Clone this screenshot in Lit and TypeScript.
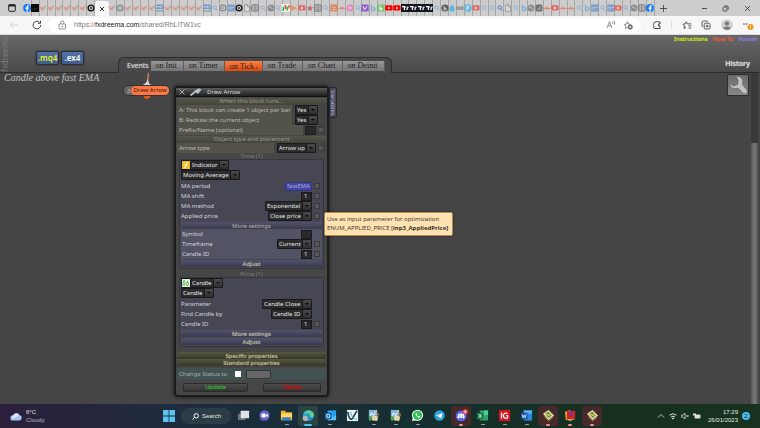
import { LitElement, html, css, svg, nothing } from "lit";
import { customElement, property } from "lit/decorators.js";

/* ---------- favicons of the tab strip (8x8 view box) ---------- */
const lens = (c: string) => svg`<circle cx="3.6" cy="3.4" r="1.7" fill="none" stroke=${c} stroke-width=".8"/><path d="M4.8 4.8 6.4 6.6" stroke=${c} stroke-width=".9"/>`;
const tube = (c: string) => svg`<rect x=".2" y="1.2" width="7.4" height="5.4" rx="1.4" fill=${c}/><path d="M3.1 2.7v2.6L5.3 4z" fill="#fff"/>`;
const knot = (bg: string, fg: string) => svg`<circle cx="4" cy="4" r="3.6" fill=${bg}/><circle cx="4" cy="4" r="1.5" fill="none" stroke=${fg} stroke-width="1.1"/>`;
const tile = (bg: string, t: unknown) => svg`<rect x=".3" y=".4" width="7.4" height="7.2" rx=".6" fill=${bg}/>${t}`;

const FAV: Record<string, unknown> = {
  f: svg`<circle cx="4" cy="4" r="3.9" fill="#1877f2"/><path d="M4.7 7.8V4.8h1l.2-1.2H4.7v-.7c0-.4.2-.6.7-.6h.5v-1c-1.500-.3-2.400.2-2.400 1.500v.8h-1v1.200h1v3z" fill="#fff"/>`,
  k: svg`<rect y="0" width="8" height="8" fill="#0b0b0b"/><path d="M1.500 5.500 6 4.300" stroke="#3a3a3a"/>`,
  x: svg`<path d="M.5 2.400l1.800 2.200L5 6" stroke="#e39a94" stroke-width="1.300" fill="none"/><path d="M2.400 5.800 7 1.800" stroke="#cf9a94" stroke-width="1.300"/><path d="M3.800 5.600 7 3.400" stroke="#a9c3ae" stroke-width=".9"/><circle cx="3" cy="4.900" r="1.300" fill="#dc948c"/>`,
  o: knot("#1d1d1d", "#ddd"),
  q: knot("#8d8d8d", "#d6d6d6"),
  m: tile("#6c93cc", svg`<path d="M1 3.800V2l1 1 1-1v1.800M4 2h1.200v1.800H4zM6 2h1" stroke="#dfe9f5" stroke-width=".6" fill="none"/><rect x="1" y="5" width="6" height="1.400" fill="#e7d78e"/>`),
  s: lens("#7fa9d8"),
  S: lens("#2f6fc0"),
  b: tile("#7f9cc9", svg`<path d="M1 3.400h6M1 5h4" stroke="#b9cae4" stroke-width=".8"/>`),
  d: svg`<path d="M1.600.8h3l2 2v4.600h-5z" fill="#dcdcdc" stroke="#777" stroke-width=".6"/><path d="M4.500.8v2.100h2.100" fill="none" stroke="#777" stroke-width=".6"/>`,
  g: svg`<rect x=".6" y=".8" width="6.800" height="6.400" rx="1.500" fill="none" stroke="#777" stroke-width="1"/><path d="M.6 3h6.800M.6 5.200h6.800M4 .8v6.400" stroke="#777" stroke-width=".7"/>`,
  r: svg`<circle cx="4" cy="4" r="3.500" fill="#8b8f92"/><path d="M2 2.600l2 .8 1.800 2" stroke="#ccc" stroke-width="1" fill="none"/>`,
  R: svg`<rect x=".6" y=".6" width="6.800" height="6.800" rx="1.500" fill="#6b7276"/><path d="M2 6 6 2M4 5h2" stroke="#c3c8cb" stroke-width=".8"/>`,
  c: svg`<rect width="8" height="8" fill="#eee"/><path d="M1.300 3v4" stroke="#2b9b3a" stroke-width="1.300"/><path d="M3.300 1v4" stroke="#d23a33" stroke-width="1.300"/><path d="M5.200 2.500v4" stroke="#2b9b3a" stroke-width="1.300"/><path d="M7 1v3.500" stroke="#d23a33" stroke-width="1.200"/>`,
  p: svg`<path d="M.6 1v6.200L7.800 4.200z" fill="#de9a68"/>`,
  y: tube("#e0706c"),
  Y: tube("#f00"),
  a: svg`<path d="M4 .6l1 2.300 2.500.2-1.900 1.700.6 2.500L4 6 1.800 7.300l.6-2.500L.5 3.100 3 2.900z" fill="#cc7474"/><circle cx="3" cy="4.400" r="1" fill="#6d84b4"/>`,
  e: tile("#dc8a62", svg`<path d="M2.200 2.600 4 4.200l1.800-1.600M2.500 5.600h3" stroke="#f3e1d6" stroke-width=".7" fill="none"/>`),
  h: svg`<path d="M.4 4.500h1.800l.8-1.200 1 2 1-1.600.8.800h1.800" stroke="#dd8873" stroke-width="1.100" fill="none"/>`,
  i: svg`<circle cx="4" cy="4" r="3.500" fill="#e083b4"/><path d="M4 1.200v5.600M1.500 2.700l5 2.600M6.500 2.700l-5 2.600" stroke="#f5d3e5" stroke-width=".6"/>`,
  u: tile("#8e62c9", svg`<path d="M2 2.300 3.600 5.600 6 2.300" stroke="#eee" stroke-width="1" fill="none"/>`),
  B: svg`<path d="M2.500.8v5l1.400.9 2.100-1.200V4.100L3.700 3.300" stroke="#74ace4" stroke-width="1.200" fill="none"/>`,
  n: tile("#7cc576", svg`<path d="M3 1.800v4M3 4.200h1.800v1.600H3" stroke="#fff" stroke-width=".9" fill="none"/>`),
  t: svg`<rect width="8" height="8" fill="#131722"/><path d="M1 2.600h2.400V6M5.600 6 7.200 2.600" stroke="#fff" stroke-width="1.200" fill="none"/><circle cx="4.800" cy="3" r=".7" fill="#fff"/>`,
  w: svg`<circle cx="4" cy="4" r="3.600" fill="#5b5b5b"/><path d="M3.200 2v4M3.200 4.100h1.700V6H3.200" stroke="#ddd" stroke-width=".9" fill="none"/>`,
  l: svg`<path d="M4 .5C5.500 2.300 6.700 3.500 6.700 5a2.700 2.700 0 0 1-5.400 0C1.300 3.500 2.500 2.300 4 .5z" fill="#5fb9de"/>`,
  j: svg`<path d="M.5 2.500c1.500-.6 2.500-.4 3.500.4 1-.8 2-1 3.500-.4v3.300H.5z" fill="#8b8b8b"/><path d="M1.500 4h5" stroke="#ccc" stroke-width=".6"/>`,
  z: svg`<circle cx="4" cy="4" r="3.700" fill="#5fb7de"/><path d="M3 6V2.200h2.500M3 4h2" stroke="#e9f5fb" stroke-width=".9" fill="none"/>`,
};
const fav = (k: string) => html`<svg class="fav" viewBox="0 0 8 8" aria-hidden="true">${FAV[k]}</svg>`;

/* ---------- shared form pieces ---------- */
const formStyles = css`
  * { box-sizing: border-box; }
  select, input, button { font: inherit; color: inherit; margin: 0; border: 0; padding: 0; border-radius: 0; outline: 0; background: none; }
  select { appearance: none; }
`;

@customElement("fx-select")
class FxSelect extends LitElement {
  @property() value = "";
  @property() label = "";
  static styles = [formStyles, css`
    :host { display: inline-grid; height: 10px; border: 1px solid #19191b; border-radius: 1px; background: #2c2c2f; color: #e6e6e6; }
    select { grid-area: 1 / 1; height: 8px; line-height: 8px; padding: 0 10px 0 1px; }
    .arrow { grid-area: 1 / 1; justify-self: end; width: 9px; height: 8px; border-left: 1px solid #19191b; background: linear-gradient(#4a4a4c, #2f2f31); pointer-events: none; display: grid; place-items: center; }
    .arrow::after { content: ""; border: 2px solid transparent; border-top-color: #0c0c0c; border-bottom: 0; }
  `];
  render() {
    return html`<select aria-label=${this.label}><option>${this.value}</option></select><span class="arrow"></span>`;
  }
}

type Row = { label: string; kind: "select" | "input" | "param"; value: string; tick?: boolean };

@customElement("fx-rows")
class FxRows extends LitElement {
  @property({ attribute: false }) rows: Row[] = [];
  static styles = [formStyles, css`
    :host { display: block; }
    .row { display: flex; align-items: center; height: 10px; gap: 2px; }
    .name { flex: 1; white-space: nowrap; }
    .text { width: 11px; height: 9px; background: #29292b; border: 1px solid #19191b; padding: 0 2px; color: #e6e6e6; }
    .param { width: 27px; background: #4343a2; color: #a9a9dc; border-color: #36367c; padding: 0 1px; text-align: right; }
    .tick { appearance: none; width: 6px; height: 6px; background: #565656; border: 1px solid #39393b; }
    .gap { width: 6px; }
  `];
  render() {
    return this.rows.map((r, i) => html`<div class="row">
      <label class="name" for="c${i}">${r.label}</label>
      ${r.kind === "select"
        ? html`<fx-select id="c${i}" .value=${r.value} .label=${r.label}></fx-select>`
        : html`<input id="c${i}" class="text ${r.kind}" .value=${r.value}>`}
      ${r.tick ? html`<input class="tick" type="checkbox" aria-label="Use as input parameter">` : html`<span class="gap"></span>`}
    </div>`);
  }
}

const TIME_ROWS: Row[] = [
  { label: "MA period", kind: "param", value: "fastEMA", tick: true },
  { label: "MA shift", kind: "input", value: "1", tick: true },
  { label: "MA method", kind: "select", value: "Exponential", tick: true },
  { label: "Applied price", kind: "select", value: "Close price", tick: true },
];
const MORE_ROWS: Row[] = [
  { label: "Symbol", kind: "input", value: "" },
  { label: "Timeframe", kind: "select", value: "Current", tick: true },
  { label: "Candle ID", kind: "input", value: "1", tick: true },
];
const PRICE_ROWS: Row[] = [
  { label: "Parameter", kind: "select", value: "Candle Close" },
  { label: "Find Candle by", kind: "select", value: "Candle ID" },
  { label: "Candle ID", kind: "input", value: "1", tick: true },
];

/* ---------- block editor window ---------- */
@customElement("fx-block")
class FxBlock extends LitElement {
  static styles = [formStyles, css`
    :host { display: flex; align-items: flex-start; width: 163px; color: #bababa; }
    .win { width: 155px; border: 2px solid #1c1c1c; border-radius: 4px; background: #464646; box-shadow: 0 0 4px #161616; padding-bottom: 3px; }
    .title { display: flex; align-items: center; height: 9px; padding-left: 3px; gap: 5px; background: linear-gradient(#5a5a5a, #1f1f1f); border-bottom: 1px solid #111; color: #ddd; }
    .title svg { height: 8px; }
    .title .x { width: 6px; }
    .title .pen { width: 12px; }
    .title b { font-weight: 400; }
    .side { writing-mode: vertical-rl; width: 8px; height: 31px; line-height: 7px; margin-top: 1px; padding-top: 2px; background: #47475c; border: 1px solid #26262e; color: #bcbcd0; border-radius: 0 2px 2px 0; }
    .sec { margin: 1px 1px 0; background: #444; }
    .olive { height: 7px; line-height: 7px; text-align: center; background: linear-gradient(#55564a, #43443a); color: #98988a; overflow: hidden; }
    .r { display: flex; align-items: stretch; height: 10px; }
    .r label { flex: 1; background: #53534a; padding-left: 2px; line-height: 10px; white-space: nowrap; }
    .ctl { display: flex; align-items: center; justify-content: flex-end; gap: 2px; padding: 0 2px; }
    .wide { width: 34px; padding-right: 8px; }
    .arrowtype { width: 52px; }
    .text { width: 11px; height: 9px; background: #29292b; border: 1px solid #1f1f1f; }
    .tick { appearance: none; flex: none; width: 6px; height: 6px; background: #565656; border: 1px solid #3a3a3a; }
    .cap { height: 6px; line-height: 6px; text-align: center; color: #7e7e7e; }
    .box { margin: 0 3px; border: 1px solid #363640; border-radius: 1px; background: #474754; color: #d2d2d8; padding: 0 1px 1px; }
    .pick { display: flex; height: 10px; color: #ddd; }
    .pick svg { width: 9px; height: 10px; background: #19191b; }
    .box fx-rows { padding: 0 2px 0 0; }
    .main { margin-top: 1px; }
    .bar { display: block; width: 100%; height: 7px; line-height: 6px; text-align: center; background: linear-gradient(#52526e, #3a3a4c); color: #b6b69e; border-radius: 1px; overflow: hidden; }
    .bold { text-shadow: 0 0 1px currentColor; }
    .more { background: #535366; margin: 1px 0; }
    .more fx-rows { padding-left: 1px; }
    .two { display: grid; gap: 1px; margin-top: 1px; }
    .price { margin-top: 2px; }
    .props { display: block; width: calc(100% - 2px); height: 7px; line-height: 6px; margin: 0 1px; background: linear-gradient(#56573f, #35362a); color: #b9b98c; overflow: hidden; }
    .first { margin-top: 5px; }
    .status { display: flex; align-items: center; height: 12px; margin: 2px 1px 0; padding-left: 2px; background: #425252; color: #a4b0b0; }
    .status .chk { appearance: none; width: 6px; height: 6px; background: #fff; margin: 0 5px 0 8px; }
    .status .field { width: 25px; height: 9px; background: #666; border: 1px solid #333; border-radius: 1px; }
    .acts { display: flex; justify-content: space-between; padding: 3px 6px 0 7px; }
    .acts button { height: 9px; line-height: 7px; border: 1px solid #2a2a2a; border-radius: 2px; background: linear-gradient(#4c4c4c, #343434); }
    .upd { width: 65px; color: #2fae2f; }
    .del { width: 58px; color: #d00d0d; }
  `];
  render() {
    return html`
    <div class="win">
      <div class="title">
        <svg class="x" viewBox="0 0 6 8" stroke="#aaa" aria-hidden="true"><path d="M.5 1.500l5 5M5.500 1.500l-5 5"/></svg>
        <svg class="pen" viewBox="0 0 12 8" aria-hidden="true"><path d="M.5 7.500 6 3.200" stroke="#c3cdd2" stroke-width="1.600"/><path d="M4 3l4 3 3.500-4.500L9 .3 4 3z" fill="#b7c0c5"/></svg>
        <b>Draw Arrow</b>
      </div>
      <section class="sec">
        <div class="olive">When this block runs...</div>
        <div class="r"><label>A: This block can create 1 object per bar</label><span class="ctl wide"><fx-select value="Yes" label="One object per bar"></fx-select></span></div>
        <div class="r"><label>B: Redraw the current object</label><span class="ctl wide"><fx-select value="Yes" label="Redraw the current object"></fx-select></span></div>
        <div class="r"><label for="pfx">Prefix/Name (optional)</label><span class="ctl"><input id="pfx" class="text"><input type="checkbox" class="tick" aria-label="Use as input parameter"></span></div>
      </section>
      <section class="sec">
        <div class="olive">Object type and placement</div>
        <div class="r"><label>Arrow type</label><span class="ctl arrowtype"><fx-select value="Arrow up" label="Arrow type"></fx-select><input type="checkbox" class="tick" aria-label="Use as input parameter"></span></div>
      </section>
      <div class="cap">Time (1)</div>
      <section class="box">
        <div class="pick"><svg viewBox="0 0 9 10" aria-hidden="true"><rect x="1" y="1" width="8" height="8" fill="#f3c02c"/><path d="M3 8c2 0 1.500-5.500 4-5.500M3.500 5h3" stroke="#fff" fill="none"/></svg><fx-select value="Indicator" label="Source"></fx-select></div>
        <div class="pick"><fx-select value="Moving Average" label="Indicator"></fx-select></div>
        <fx-rows class="main" .rows=${TIME_ROWS}></fx-rows>
        <div class="more"><button class="bar">More settings</button><fx-rows .rows=${MORE_ROWS}></fx-rows></div>
        <button class="bar bold">Adjust</button>
      </section>
      <div class="cap price">Price (1)</div>
      <section class="box">
        <div class="pick"><svg viewBox="0 0 9 10" aria-hidden="true"><rect x="1" y="1" width="8" height="8" fill="#e4f3df"/><path d="M3 2v6M6.500 3v5" stroke="#4ba844"/><path d="M2.200 3.500h1.600v3H2.200zM5.600 4.500h1.800v2.500H5.600z" fill="#fff" stroke="#4ba844" stroke-width=".7"/></svg><fx-select value="Candle" label="Source"></fx-select></div>
        <div class="pick"><fx-select value="Candle" label="Candle"></fx-select></div>
        <fx-rows class="main" .rows=${PRICE_ROWS}></fx-rows>
        <div class="two"><button class="bar bold">More settings</button><button class="bar bold">Adjust</button></div>
      </section>
      <button class="props bold first">Specific properties</button>
      <button class="props bold">Standard properties</button>
      <div class="status"><label for="st">Change Status to</label><input id="st" class="chk" type="checkbox"><input class="field" aria-label="Status"></div>
      <div class="acts"><button class="upd bold">Update</button><button class="del bold">Delete</button></div>
    </div>
    <div class="side">Variables</div>`;
  }
}

/* ---------- browser frame ---------- */
@customElement("browser-bar")
class BrowserBar extends LitElement {
  static styles = [formStyles, css`
    :host { display: block; font-family: "Liberation Sans", sans-serif; font-size: 7px; color: #555; }
    .tabs { display: flex; height: 16px; background: #cdcdcd; align-items: stretch; }
    .menu { flex: none; width: 24px; display: grid; place-items: center; }
    .menu svg { width: 8px; height: 8px; }
    .group { display: flex; min-width: 0; }
    .early { flex: none; width: 71px; }
    .late { flex: 1; }
    .tab { flex: 1; min-width: 0; display: flex; align-items: center; justify-content: center; border-right: 1px solid #a6a6a6; }
    .fav { flex: none; width: 8px; height: 8px; }
    .active { flex: none; width: 14px; background: #f7f7f7; border-radius: 3px 3px 0 0; display: grid; place-items: center; margin-top: 1px; }
    .active svg { width: 6px; height: 6px; }
    .sys { flex: none; width: 105px; display: flex; justify-content: space-between; align-items: center; padding: 0 9px 0 5px; }
    .sys svg { width: 7px; height: 7px; }
    .sys .plus { margin-right: 19px; }
    .bar { display: flex; align-items: center; height: 19px; background: #f7f7f7; border-bottom: 1px solid #dcdcdc; }
    .nav { width: 49px; display: flex; gap: 13px; padding-left: 9px; }
    .nav svg, .tools svg { width: 10px; height: 10px; display: block; }
    .addr { flex: 1; height: 15px; border-radius: 8px; background: #fff; display: flex; align-items: center; padding: 0 8px; gap: 7px; }
    .addr svg { width: 10px; height: 10px; }
    .url { flex: 1; display: flex; color: #7a7a7a; white-space: pre; }
    .url b { font-weight: 400; color: #222; }
    .tools { width: 119px; display: flex; justify-content: space-between; align-items: center; padding: 0 6px 0 11px; }
    .tools .me { width: 12px; height: 12px; }
    .tools .dots { width: 12px; height: 12px; }
    .line { width: 1px; height: 8px; background: #ddd; }
  `];
  render() {
    const tabs = (s: string) => [...s].map((k) => html`<span class="tab">${fav(k)}</span>`);
    return html`
    <div class="tabs">
      <span class="menu"><svg viewBox="0 0 8 8" aria-hidden="true"><rect x=".7" y=".7" width="6.600" height="6.600" rx="1" fill="none" stroke="#222"/><path d="M.5 1.500h7" stroke="#222" stroke-width="2"/></svg></span>
      <div class="group early">${tabs("fkxxxxxxo")}</div>
      <span class="active"><svg viewBox="0 0 6 6" stroke="#333" aria-hidden="true"><path d="M1 1l4 4M5 1 1 5"/></svg></span>
      <div class="group late">${tabs("xqxxxxmxxxxxmsqbodgsrscpyagsehisuBnYYttttswljzyssSdsBrRhyhhsBbsbysrgf")}</div>
      <div class="sys">
        <svg class="plus" viewBox="0 0 7 7" stroke="#333" stroke-width=".8"><path d="M3.500 0v7M0 3.500h7"/></svg>
        <svg viewBox="0 0 7 7" stroke="#333" stroke-width=".8"><path d="M1 3.500h5"/></svg>
        <svg viewBox="0 0 7 7" stroke="#333" stroke-width=".8" fill="none"><rect x="1" y="2" width="4" height="4" rx="1"/><path d="M2.500.9h2.500a1.200 1.200 0 0 1 1.200 1.200v2.500"/></svg>
        <svg viewBox="0 0 7 7" stroke="#333" stroke-width=".8"><path d="M1 1l5 5M6 1 1 6"/></svg>
      </div>
    </div>
    <div class="bar">
      <div class="nav">
        <svg viewBox="0 0 10 10" stroke="#cfcfcf" fill="none"><path d="M9 5H1.500M4.500 2l-3 3 3 3"/></svg>
        <svg viewBox="0 0 10 10" stroke="#444" fill="none"><path d="M8.700 5A3.800 3.800 0 1 1 7.400 2.200M8.500.8v2.500H6"/></svg>
      </div>
      <div class="addr">
        <svg viewBox="0 0 10 10" stroke="#777" stroke-width=".8" fill="none"><rect x="2" y="4" width="6.500" height="5" rx=".8"/><path d="M3.600 4V2.500a1.600 1.600 0 0 1 3.200 0V4"/><circle cx="5.200" cy="6.500" r=".4" fill="#777"/></svg>
        <span class="url">https://<b>fxdreema.com</b>/shared/RhLiTW1vc</span>
        <svg viewBox="0 0 10 10" stroke="#777" stroke-width=".8" fill="none"><path d="M1 8l2.500-6.500L6 8M2 5.800h3M6.500 1.500q1.200 1 0 2.500M8 .8q1.800 1.700 0 4"/></svg>
        <svg viewBox="0 0 10 10" stroke="#666" stroke-width=".8" fill="none"><path d="M4.500 7.500 2.500 8.500l.4-2.400L1.200 4.400l2.300-.4 1-2.200 1 2.200 2.200.4"/><circle cx="7.200" cy="7" r="2.200" fill="#666"/><path d="M7.200 5.800v2.400M6 7h2.400" stroke="#fff"/></svg>
      </div>
      <div class="tools">
        <svg viewBox="0 0 10 10" stroke="#444" fill="none"><path d="M3 2h1.200a1 1 0 0 1 1.800 0h2v2a1.100 1.100 0 1 0 0 2v2.500H3C1.500 8.500 1.200 7 2 6.300 1 5.500 1.200 4.500 2 4c-.3-1 .2-2 1-2z"/></svg>
        <span class="line"></span>
        <svg viewBox="0 0 10 10" stroke="#444" stroke-width=".9" fill="none"><path d="M4 7.300 2 8.500l.5-2.600L.9 4.200l2.300-.3L4.300 1.700l1.100 2.200h3.800M6.500 5.900h2.700M6.500 8h2.700"/></svg>
        <svg viewBox="0 0 10 10" stroke="#444" stroke-width=".9" fill="none"><rect x="3.200" y="3.200" width="5.800" height="5.800" rx="1.200"/><path d="M2 7A1.500 1.500 0 0 1 1 5.500V2.500A1.500 1.500 0 0 1 2.500 1h3A1.500 1.500 0 0 1 7 2M6.100 4.600v3M4.600 6.100h3"/></svg>
        <svg class="me" viewBox="0 0 12 12"><circle cx="6" cy="6" r="5.700" fill="#cfcdca"/><circle cx="6" cy="4.500" r="2.100" fill="#777"/><path d="M2.500 9.500C2.500 6.800 9.500 6.800 9.500 9.500 8 11 4 11 2.500 9.500z" fill="#777"/></svg>
        <svg class="dots" viewBox="0 0 12 12"><circle cx="2" cy="5" r=".8" fill="#444"/><circle cx="4.500" cy="5" r=".8" fill="#444"/><circle cx="8.500" cy="8" r="3" fill="#ee9a1c"/><path d="M8.500 6.300v2M8.500 9v.8" stroke="#fff" stroke-width=".8"/></svg>
      </div>
    </div>`;
  }
}

/* ---------- taskbar ---------- */
const mt = svg`<path d="M1 5 7 1l6 6-6 5z" fill="#e6d9a0"/><path d="M3.500 5.200 7 3l3.500 3.800-3.500 3z" fill="#4f8c5a"/><path d="M4.500 5.500l3 1.500 1.500-2" stroke="#f5c93a" stroke-width="1.200" fill="none"/><path d="M2 8l5 5 5-4" stroke="#a97d35" fill="none"/>`;
const chartApp = svg`<rect x="2" y="1" width="9" height="9" fill="#7fb2dc"/><path d="M3 8l2-4 2 3 3-5" stroke="#fff" fill="none"/><path d="M6 7l6 1-1 5-6-1z" fill="#e7d9a6"/><path d="M2 7l4 2-2 4-2-1z" fill="#58a355"/><path d="M9 4l3 1v3" stroke="#e0812c" fill="none"/>`;
const APPS: { n: string; p: unknown; run?: string; hot?: string }[] = [
  { n: "Task view", p: svg`<rect x="1" y="5" width="8" height="7" fill="#6e7276"/><rect x="4" y="2" width="9" height="8" rx=".5" fill="#dfe2e4"/>` },
  { n: "Chat", p: svg`<circle cx="7" cy="7" r="5.600" fill="#6a62c6"/><path d="M2 12.500l1-3 3 2z" fill="#5a53b4"/><rect x="3.800" y="4.800" width="4.400" height="4.400" rx="1" fill="#fff"/><path d="M8.500 6.500 10.600 5v4L8.500 7.600z" fill="#fff"/>` },
  { n: "Explorer", run: "grey", p: svg`<path d="M1 2h4.500l1 1.500H13V12H1z" fill="#f0b429"/><path d="M1 5h12v4H1z" fill="#ffd766"/><path d="M2.500 9h9v3.500h-9z" fill="#2f7fd0"/>` },
  { n: "Edge", run: "blue", hot: "lit", p: svg`<circle cx="7" cy="7" r="6" fill="#1f86c9"/><path d="M1.500 5.500C3 .3 12 .2 13 6.500c.2 3-4.500 3.200-4.800 1.500C9 5 4.500 3.500 1.500 5.500z" fill="#5fd08d"/><path d="M1 7c1-3 5-3.500 6.500-1.500C5.500 6 5 9 8 11.500 5 14 1 11 1 7z" fill="#2ba6dd"/><circle cx="3.500" cy="10" r="2.800" fill="#b5b5b5"/>` },
  { n: "Outlook", run: "grey", p: svg`<rect x="4" y="1.500" width="9" height="9" fill="#2aa3e8"/><path d="M4 7l4.500 2.500L13 7v5H4z" fill="#58c3f5"/><rect x="1" y="4" width="7" height="7" rx=".6" fill="#0f64b8"/><circle cx="4.500" cy="7.500" r="1.800" fill="none" stroke="#fff"/>` },
  { n: "Charts", p: svg`<rect x="1" y="1" width="12" height="12" fill="#eef3f2"/><path d="M2 3c1 8 3 8 4 8s3-5 6-9" stroke="#1d4a5e" stroke-width="1.800" fill="none"/><path d="M5 3c1 6 3 8 7 8" stroke="#3fb1a5" fill="none"/>` },
  { n: "Terminal A", run: "grey", p: chartApp },
  { n: "Terminal B", run: "grey", p: chartApp },
  { n: "WhatsApp", run: "grey", p: svg`<circle cx="7" cy="6.800" r="6" fill="#fff"/><path d="M1 13l1.200-4 3 3z" fill="#fff"/><circle cx="7" cy="6.800" r="5" fill="#2fbf55"/><path d="M4.800 4.500c.2 2.500 2 4.400 4.600 4.800l.5-1.300-1.300-.6-.6.6C7 7.500 6.400 6.900 6 6l.6-.6L6 4z" fill="#fff"/>` },
  { n: "Telegram", p: svg`<circle cx="7" cy="7" r="5.600" fill="#2ba0dc"/><path d="M3.200 7l7-2.800-1.200 6-2.300-1.700-1.100 1V7.800l3-2.300-3.800 2.100z" fill="#fff"/>` },
  { n: "Discord", run: "red", hot: "warn", p: svg`<circle cx="6.500" cy="7.500" r="5.800" fill="#5865f2"/><path d="M3.500 5.500c2-1 4-1 6 0l1 4-1.700.8-.6-1H4.800l-.6 1L2.500 9.500z" fill="#fff"/><circle cx="5.100" cy="7.600" r=".7" fill="#5865f2"/><circle cx="7.900" cy="7.600" r=".7" fill="#5865f2"/><circle cx="11" cy="3" r="2.800" fill="#f0504e"/><circle cx="11" cy="3" r="1" fill="#fff"/>` },
  { n: "Excel", run: "grey", p: svg`<rect x="4" y="1.500" width="9" height="11" rx=".6" fill="#2fa567"/><path d="M8.500 1.500H13v5H8.500z" fill="#4fcf8b"/><rect x="1" y="4" width="7" height="7" rx=".6" fill="#12733f"/><path d="M3 5.500 6 9.500M6 5.500 3 9.500" stroke="#fff"/>` },
  { n: "IG", run: "grey", p: svg`<rect x="1" y="1" width="12" height="12" fill="#d8131b"/><path d="M3.800 3.800v6.400" stroke="#fff" stroke-width="1.400"/><path d="M10.300 5.200A2.600 2.900 0 1 0 10.500 9V7.300H8.400" stroke="#fff" stroke-width="1.200" fill="none"/>` },
  { n: "Word", run: "grey", p: svg`<rect x="4" y="1.500" width="9" height="11" rx=".6" fill="#2f86dd"/><path d="M4 1.500h9v3.500H4z" fill="#58b0f5"/><rect x="1" y="4" width="7" height="7" rx=".6" fill="#174fa5"/><path d="M2.300 5.700l1.100 3.800 1.100-3 1.100 3 1.100-3.800" stroke="#fff" stroke-width=".8" fill="none"/>` },
  { n: "MetaTrader", run: "red", hot: "warn", p: mt },
  { n: "Library", run: "red", p: svg`<path d="M1 3l6-2 1 9-6 2z" fill="#e8b02c"/><path d="M3 2h9v9H3z" fill="#c9252b"/><path d="M6 3h3v4H6z" fill="#7c2bb0"/><path d="M3 11l3 2 6-2" fill="#f1d06a"/>` },
  { n: "MetaTrader 2", run: "red", hot: "warn", p: mt },
];

@customElement("task-bar")
class TaskBar extends LitElement {
  static styles = [formStyles, css`
    :host { display: grid; grid-template-columns: 1fr auto 1fr; align-items: center; height: 24px; font: 6px/8px "Liberation Sans", sans-serif; color: #e4e6e8; background: linear-gradient(90deg, #2b1f3b 0%, #202a3e 20%, #182e3a 38%, #152f2c 60%, #17301f 80%, #17331f 100%); }
    .weather { display: flex; align-items: center; gap: 4px; padding-left: 10px; }
    .weather svg { width: 12px; height: 9px; }
    .weather span { display: block; color: #b4b6c4; }
    .mid { display: flex; align-items: center; }
    .start { width: 22px; height: 20px; display: grid; place-items: center; }
    .start svg { width: 12px; height: 12px; }
    .find { width: 50px; height: 16px; border-radius: 8px; background: #2b3c46; display: flex; align-items: center; gap: 3px; padding-left: 11px; margin: 0 2px 0 1px; }
    .find svg { width: 7px; height: 7px; }
    .apps { width: 369px; display: flex; justify-content: space-between; }
    .app { width: 20px; height: 20px; border-radius: 2px; display: grid; justify-items: center; align-content: start; padding-top: 3px; gap: 2px; }
    .app svg { width: 13px; height: 13px; }
    .lit { background: #2b4344; }
    .warn { background: #46292b; }
    .mark { width: 4px; height: 1px; background: #9aa19e; border-radius: 1px; }
    .mark.blue { width: 8px; height: 2px; background: #55c0ee; }
    .mark.red { background: #f28e8e; height: 2px; }
    .tray { justify-self: end; display: flex; align-items: center; gap: 4px; padding-right: 10px; text-align: right; }
    .tray svg { width: 8px; height: 8px; }
    .clock { margin-left: 3px; }
    .badge { width: 8px; height: 8px; border-radius: 4px; background: #4db8ea; color: #123; text-align: center; }
  `];
  render() {
    return html`
    <div class="weather">
      <svg viewBox="0 0 12 9" aria-hidden="true"><path d="M3 8.500a2.600 2.600 0 0 1 0-5.200A3.500 3.500 0 0 1 9.500 3a2.800 2.800 0 0 1 0 5.500z" fill="#a9c3f2"/><path d="M3 7a2 2 0 0 1 .5-3.500C4.500 1 8 1 9 3.500" fill="#d7e3fb"/></svg>
      <div>6°C<span>Cloudy</span></div>
    </div>
    <div class="mid">
      <button class="start" aria-label="Start"><svg viewBox="0 0 12 12" fill="#5cc3f2"><path d="M0 0h5.600v5.600H0zM6.400 0H12v5.600H6.400zM0 6.400h5.600V12H0zM6.400 6.400H12V12H6.400z"/></svg></button>
      <button class="find"><svg viewBox="0 0 7 7" fill="none" stroke="#fff"><circle cx="4.200" cy="2.800" r="2.200"/><path d="M2.600 4.500.4 6.700"/></svg>Search</button>
      <div class="apps">${APPS.map((a) => html`<button class="app ${a.hot ?? ""}" aria-label=${a.n}><svg viewBox="0 0 14 14">${a.p}</svg>${a.run ? html`<span class="mark ${a.run}"></span>` : nothing}</button>`)}</div>
    </div>
    <div class="tray">
      <svg viewBox="0 0 8 8" fill="none" stroke="#ddd" stroke-width=".8"><path d="M1 5.500 4 2.500l3 3"/></svg>
      <svg viewBox="0 0 8 8" fill="none" stroke="#ddd"><path d="M.5 3.200q3.500-3 7 0M2 5q2-1.600 4 0"/><circle cx="4" cy="6.500" r=".6" fill="#ddd"/></svg>
      <svg viewBox="0 0 8 8" fill="none" stroke="#ddd" stroke-width=".8"><path d="M.6 3v2.200h1.300L4 7V1.200L1.900 3zM5.500 3l2 2.200M7.500 3l-2 2.200"/></svg>
      <svg viewBox="0 0 8 8"><rect x="1.500" y="2.500" width="6" height="4" rx="1" fill="#ddd"/><path d="M0 1.500h3v2H0z" fill="#ddd"/></svg>
      <div class="clock">17:29<br>26/01/2023</div>
      <span class="badge">2</span>
    </div>`;
  }
}

/* ---------- whole screen ---------- */
@customElement("app-root")
class AppRoot extends LitElement {
  static styles = [formStyles, css`
    :host { display: flex; flex-direction: column; min-height: 100vh; font: 6px/8px "Noto Sans", "Open Sans", sans-serif; background: #454545; color: #c8c8c8; }
    .head { display: flex; align-items: flex-end; height: 38px; background: linear-gradient(#686868, #494949); border-bottom: 1px solid #2c2c2c; }
    .brand { writing-mode: vertical-rl; transform: rotate(180deg); width: 9px; height: 36px; font-size: 8px; line-height: 9px; color: #7c7c7c; overflow: hidden; }
    .files { display: flex; gap: 2px; margin-left: 27px; padding-bottom: 7px; }
    .files button { width: 23px; height: 14px; font-size: 8px; line-height: 10px; border: 1px solid #2a2d33; border-radius: 2px; background: linear-gradient(#5374a6, #3e5c8c); color: #fff; box-shadow: 0 0 2px #222; font-weight: 600; }
    .files .mq { color: #eef02c; }
    .events { display: flex; align-items: center; height: 16px; margin: 0 0 -1px 34px; padding: 0 6px 0 8px; border: 1px solid #2c2c2c; border-bottom: 0; border-radius: 6px 6px 0 0; background: #484848; }
    .events .cap { font-size: 7px; margin-right: 2px; color: #ccc; text-shadow: 0 0 1px #ccc; }
    .ev { height: 10px; padding: 0 6px 0 5px; font: 8px/9px "Liberation Serif", serif; color: #1c1c1c; background: linear-gradient(#979797, #757575); border-right: 1px solid #5c5c5c; white-space: nowrap; }
    .ev.on { background: linear-gradient(#fb7f46, #dc4c0c); display: flex; gap: 1px; align-items: flex-end; padding-right: 4px; }
    .ev sub { font-size: 5px; line-height: 6px; color: #7a2a08; }
    .right { flex: 1; align-self: stretch; display: flex; flex-direction: column; justify-content: space-between; align-items: flex-end; padding-bottom: 4px; }
    .links { display: flex; gap: 5px; padding-right: 3px; }
    .links a, .hist { text-decoration: none; text-shadow: 0 0 1px currentColor; }
    .ins { color: #c3f019; }
    .how { color: #f2593a; }
    .forum { color: #8585f5; }
    .hist { font-size: 7px; font-weight: 600; color: #d6d6d6; padding-right: 10px; }
    .body { flex: 1; display: flex; min-height: 331px; }
    .canvas { flex: 1; position: relative; }
    h1 { margin: 0; padding: 0 4px; font: italic 10px/10px "Liberation Serif", serif; color: #c2c2c2; }
    .node { position: absolute; left: 123px; top: 12px; height: 11px; display: flex; align-items: center; border-radius: 5px; background: #666; color: #bbb; padding-left: 3px; gap: 1px; border: 1px solid #333; }
    .node b { font-weight: 400; background: #fb7846; color: #3a1505; border-radius: 5px; padding: 0 2px; height: 9px; line-height: 9px; }
    .wire { position: absolute; left: 140px; top: 0; width: 14px; height: 27px; }
    .block { position: absolute; left: 174px; top: 13px; }
    .tip { position: absolute; left: 324px; top: 139px; padding: 2px 4px 2px 2px; font: 6px/9px "Open Sans", sans-serif; color: #33302a; background: #fee1b0; border: 1px solid #b08a50; border-radius: 2px; white-space: nowrap; box-shadow: 0 0 2px #222; }
    .wrench { width: 22px; height: 22px; margin: 1px 2px 0 0; border: 1px solid #2b2b2b; border-radius: 2px; background: linear-gradient(#6b6b6b, #878787); display: grid; place-items: center; }
    .wrench svg { width: 20px; height: 20px; }
    .scroll { width: 7px; margin-right: 2px; background: #393939; padding-top: 70px; display: flex; }
    .thumb { flex: 1; background: linear-gradient(90deg, #555, #7a7a7a, #555); }
  `];
  render() {
    return html`
    <browser-bar></browser-bar>
    <header class="head">
      <span class="brand">fxdreema</span>
      <div class="files"><button class="mq">.mq4</button><button>.ex4</button></div>
      <nav class="events">
        <span class="cap">Events</span>
        <button class="ev">on Init</button><button class="ev">on Timer</button><button class="ev on">on Tick<sub>4</sub></button><button class="ev">on Trade</button><button class="ev">on Chart</button><button class="ev">on Deinit</button>
      </nav>
      <div class="right">
        <div class="links"><a class="ins" href="#i">Instructions</a><a class="how" href="#h">How To</a><a class="forum" href="#f">Forum</a></div>
        <a class="hist" href="#history">History</a>
      </div>
    </header>
    <main class="body">
      <div class="canvas">
        <h1>Candle above fast EMA</h1>
        <svg class="wire" viewBox="0 0 14 27" aria-hidden="true"><path d="M8.500 0 7.500 9" stroke="#c9794f" stroke-width="1.600"/><path d="M7.500 6 9.500 11a3.500 2 0 0 1 1 3h-7a3.500 2 0 0 1 1-3L6.500 9z" fill="#d9d6e2"/><path d="M3 21h8q-.500 5-4 5T3 21z" fill="#e05a10"/></svg>
        <div class="node">3<b>Draw Arrow</b></div>
        <fx-block class="block"></fx-block>
        <div class="tip" role="tooltip">Use as input parameter for optimization<br>ENUM_APPLIED_PRICE [<b>inp3_AppliedPrice]</b></div>
      </div>
      <button class="wrench" aria-label="Settings"><svg viewBox="0 0 20 20"><path d="M8 1.500C13 .5 16 4.500 14.500 9.500L19 15c1 2.500-1 4.500-3.500 3.500L10 13C6 15 1.500 12.500 1.500 8.500L5.500 11l4-1.500.8-4z" fill="#c2c2c2" stroke="#5a5a5a" stroke-width=".6"/></svg></button>
      <div class="scroll"><div class="thumb"></div></div>
    </main>
    <task-bar></task-bar>`;
  }
}
